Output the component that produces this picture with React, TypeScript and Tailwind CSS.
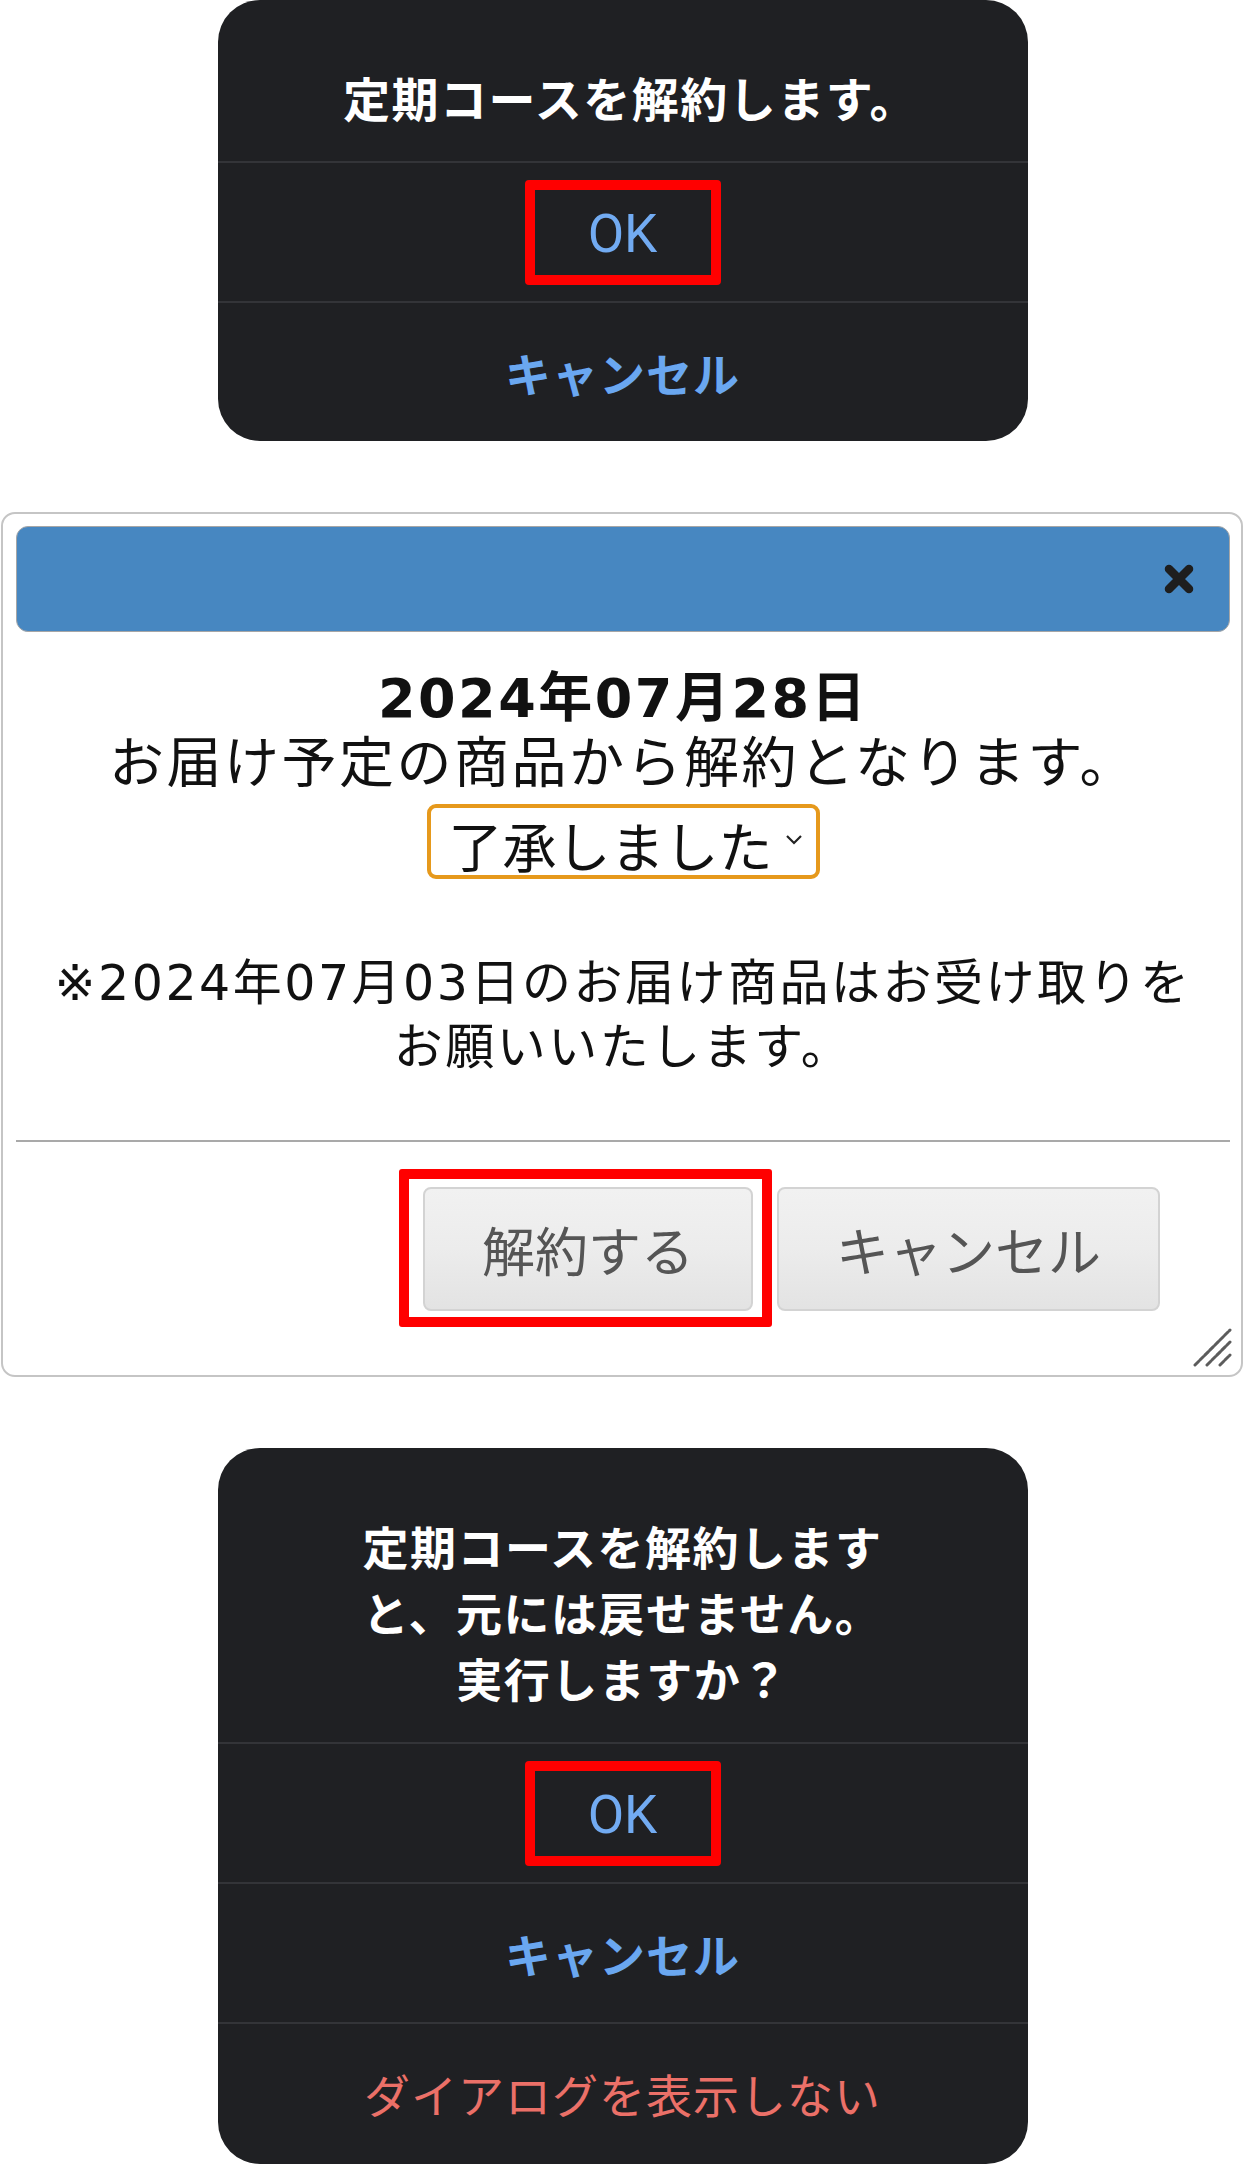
import React from "react";

const JP = "font-['Noto_Sans_CJK_JP',sans-serif]";
const WEB = "font-['DejaVu_Sans','Noto_Sans_CJK_JP',sans-serif]";

function AlertRow({
  children,
  highlight = false,
}: {
  children: React.ReactNode;
  highlight?: boolean;
}) {
  return (
    <div className="h-[140px] border-t-2 border-[#333438] flex items-center justify-center">
      {highlight ? (
        <div className="w-[196px] h-[105px] border-[10px] border-[#ff0000] rounded-[4px] flex items-center justify-center pt-[4px]">
          {children}
        </div>
      ) : (
        children
      )}
    </div>
  );
}

function OkLabel() {
  return (
    <span className="font-['Roboto',sans-serif] text-[53px] leading-none text-[#72abf2]">
      OK
    </span>
  );
}

function CancelLabel() {
  return (
    <span className={`${JP} font-bold text-[46px] tracking-[1px] leading-none text-[#6aa7f0]`}>
      キャンセル
    </span>
  );
}

function TopAlert() {
  return (
    <div className="w-[810px] rounded-[42px] bg-[#1f2023] overflow-hidden">
      <div className={`${JP} pt-[64px] pb-[31px] pl-[16px] text-center text-white font-bold text-[47px] tracking-[1.5px] leading-[66px]`}>
        定期コースを解約します。
      </div>
      <AlertRow highlight>
        <OkLabel />
      </AlertRow>
      <AlertRow>
        <CancelLabel />
      </AlertRow>
    </div>
  );
}

function CloseIcon() {
  return (
    <svg width="32" height="32" viewBox="0 0 32 32">
      <path
        d="M6 6 L26 26 M26 6 L6 26"
        stroke="#1e1e1e"
        strokeWidth="8.5"
        strokeLinecap="round"
        fill="none"
      />
    </svg>
  );
}

function ResizeGrip() {
  return (
    <svg
      className="absolute right-[9px] bottom-[7px]"
      width="40"
      height="40"
      viewBox="0 0 40 40"
    >
      <g stroke="#5c5c5c" strokeWidth="3" strokeLinecap="round" strokeDasharray="5 2">
        <path d="M3 37 L38 2" />
        <path d="M15 37 L38 14" />
        <path d="M28 37 L38 27" />
      </g>
    </svg>
  );
}

function DialogButton({ children }: { children: React.ReactNode }) {
  return (
    <button className={`${JP} h-[124px] px-[57px] border-2 border-[#d3d3d3] rounded-[8px] bg-gradient-to-b from-[#f1f1f1] via-[#ececec] to-[#e3e3e3] text-[#555555] text-[53px] leading-none`}>
      {children}
    </button>
  );
}

function WebDialog() {
  return (
    <div className={`${WEB} relative self-start ml-[1px] mt-[71px] w-[1242px] h-[865px] border-2 border-[#c5c5c5] rounded-[14px] bg-white pl-[13px] pr-[11px] pt-[12px] flex flex-col text-[#111111]`}>
      {/* title bar */}
      <div className="h-[106px] shrink-0 rounded-[12px] border border-[#a6a6a6] bg-[#4787c1] flex items-center justify-end pr-[34px]">
        <CloseIcon />
      </div>

      {/* content */}
      <div className="pt-[35px] text-center">
        <div className="font-bold text-[54px] leading-[64px] tracking-[2.5px]">2024年07月28日</div>
        <div className="text-[55px] leading-[64px] tracking-[2.5px] whitespace-nowrap">
          お届け予定の商品から解約となります。
        </div>
        <div className="mt-[9px] flex justify-center">
          <div className="w-[393px] h-[75px] border-[4px] border-[#e6991c] rounded-[9px] flex items-end pl-[18px] pr-[12px] pb-[3px]">
            <span className={`${JP} text-[54px] leading-none whitespace-nowrap shrink-0`}>了承しました</span>
            <svg className="ml-auto mb-[26px] shrink-0" width="20" height="13" viewBox="0 0 20 13">
              <path d="M3 3 L10 10 L17 3" stroke="#222" strokeWidth="2.2" fill="none" />
            </svg>
          </div>
        </div>
        <div className="mt-[73px] text-[49px] leading-[64px] tracking-[2.5px] whitespace-nowrap">
          ※2024年07月03日のお届け商品はお受け取りを
          <br />
          お願いいたします。
        </div>
      </div>

      {/* button pane */}
      <div className="mt-[60px] border-t-2 border-[#a9a9a9] pt-[45px] pr-[70px] flex justify-end gap-[24px]">
        <div className="relative">
          <DialogButton>解約する</DialogButton>
          <span className="absolute -left-[24px] -right-[19px] -top-[18px] -bottom-[16px] border-[10px] border-[#ff0000] rounded-[3px]" />
        </div>
        <DialogButton>キャンセル</DialogButton>
      </div>

      <ResizeGrip />
    </div>
  );
}

function BottomAlert() {
  return (
    <div className="mt-[71px] w-[810px] h-[716px] rounded-[42px] bg-[#1f2023] overflow-hidden">
      <div className={`${JP} pt-[64px] pb-[32px] text-center text-white font-bold text-[46px] tracking-[1.5px] leading-[66px]`}>
        定期コースを解約します
        <br />
        と、元には戻せません。
        <br />
        実行しますか？
      </div>
      <AlertRow highlight>
        <OkLabel />
      </AlertRow>
      <AlertRow>
        <CancelLabel />
      </AlertRow>
      <AlertRow>
        <span className={`${JP} text-[46px] tracking-[1px] leading-none text-[#eb7068]`}>
          ダイアログを表示しない
        </span>
      </AlertRow>
    </div>
  );
}

export default function App() {
  return (
    <div className="w-[1245px] min-h-[2165px] bg-white flex flex-col items-center overflow-hidden">
      <TopAlert />
      <WebDialog />
      <BottomAlert />
    </div>
  );
}
